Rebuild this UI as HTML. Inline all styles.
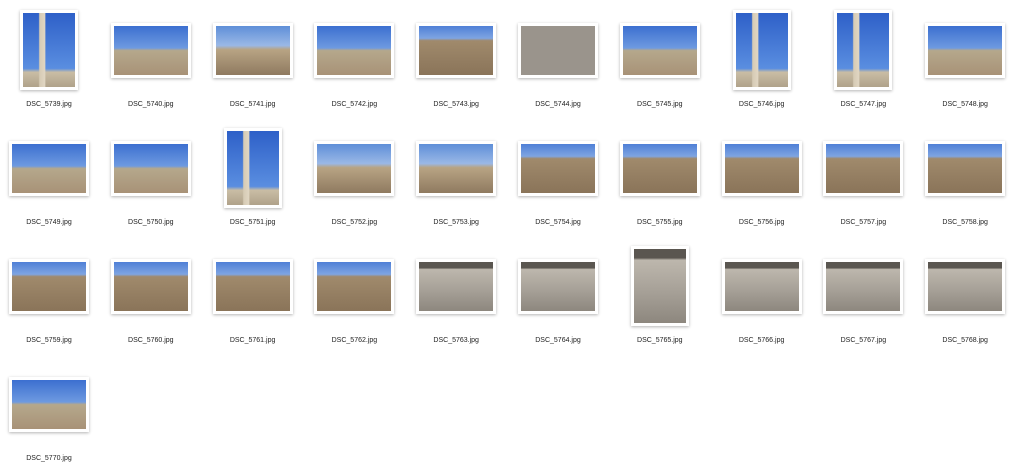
<!DOCTYPE html><html><head><style>
body{margin:0;width:1024px;height:464px;background:#fff;position:relative;overflow:hidden;font-family:"Liberation Sans",sans-serif}
.t{position:absolute;background:#fff;box-shadow:0 1px 3px rgba(0,0,0,.3);padding:3px;box-sizing:border-box}
.t div{width:100%;height:100%}
.l{width:80px;height:55px}.p{width:58px;height:80px}
.lb{position:absolute;width:100px;text-align:center;font-size:7px;color:#222}
.a{background:linear-gradient(#3c6fd0 0,#6e9ae0 45%,#b5a88c 50%,#a89277 100%)}
.b{background:linear-gradient(#5f8fd8 0,#9ab8e6 40%,#b8a484 48%,#8f7a60 100%)}
.pp{background:linear-gradient(90deg,transparent 30%,#d6cbb5 32%,#e0d6c2 42%,transparent 44%),linear-gradient(#2e60c8,#5a8ee0 75%,#c9bda5 80%,#b0a28a)}
.g{background:#9a948c}
.m{background:linear-gradient(#5a5650 0,#5a5650 12%,#bdb7ad 15%,#a59f96 60%,#8d877e 100%)}
.r{background:linear-gradient(#4f80d6 0,#7ea4e2 25%,#a08a6c 30%,#8a7459 100%)}
</style></head><body>
<script>
const items=[
['5739','p','pp'],['5740','l','a'],['5741','l','b'],['5742','l','a'],['5743','l','r'],['5744','l','g'],['5745','l','a'],['5746','p','pp'],['5747','p','pp'],['5748','l','a'],
['5749','l','a'],['5750','l','a'],['5751','p','pp'],['5752','l','b'],['5753','l','b'],['5754','l','r'],['5755','l','r'],['5756','l','r'],['5757','l','r'],['5758','l','r'],
['5759','l','r'],['5760','l','r'],['5761','l','r'],['5762','l','r'],['5763','l','m'],['5764','l','m'],['5765','p','m'],['5766','l','m'],['5767','l','m'],['5768','l','m'],
['5770','l','a']];
let h='';
items.forEach((it,i)=>{const c=i%10,r=Math.floor(i/10);const cx=49+101.8*c,cy=50+118*r;
const w=it[1]=='l'?80:58,hh=it[1]=='l'?55:80;
h+=`<div class="t ${it[1]}" style="left:${cx-w/2}px;top:${cy-hh/2}px"><div class="${it[2]}"></div></div><div class="lb" style="left:${cx-50}px;top:${cy+51}px">DSC_${it[0]}.jpg</div>`;});
document.body.innerHTML=h;
</script>
</body></html>
